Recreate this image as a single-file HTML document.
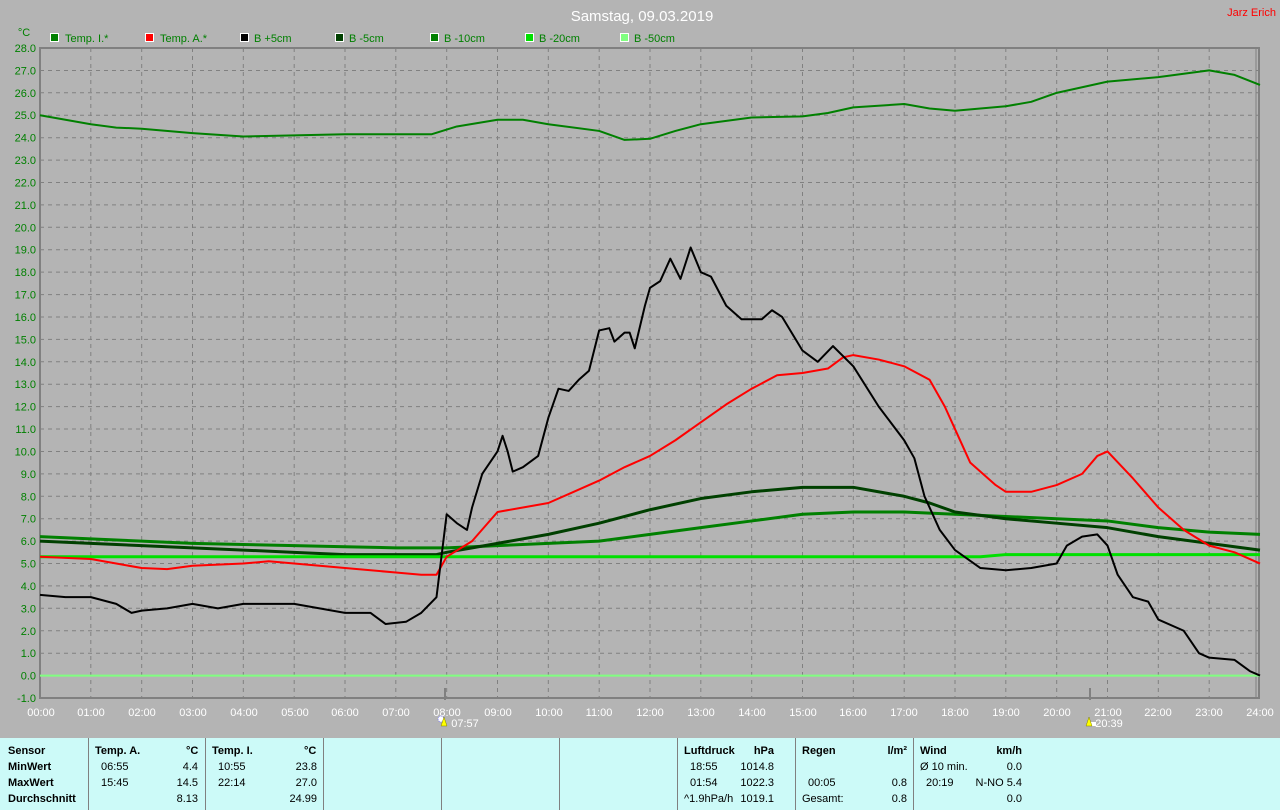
<!DOCTYPE html>
<html><head><meta charset="utf-8"><style>
html,body{margin:0;padding:0;}
body{width:1280px;height:810px;background:#b4b4b4;position:relative;overflow:hidden;font-family:"Liberation Sans",sans-serif;}
svg{position:absolute;left:0;top:0;}
.panel{position:absolute;left:0;top:738px;width:1280px;height:72px;background:#ccfaf8;font-size:11px;color:#000;}
.panel div{position:absolute;white-space:nowrap;}
.b{font-weight:bold;}
.sep{position:absolute;top:0;width:1px;height:72px;background:#808080;}
</style></head><body>
<svg width="1280" height="810" viewBox="0 0 1280 810" font-family="Liberation Sans, sans-serif">
<text x="642" y="21" fill="#ffffff" font-size="15" text-anchor="middle">Samstag, 09.03.2019</text>
<text x="1276" y="16" fill="#ff0000" font-size="11" text-anchor="end">Jarz Erich</text>
<text x="24" y="36" fill="#008000" font-size="11" text-anchor="middle">°C</text>
<g font-size="11" fill="#008000">
<rect x="50.5" y="33.5" width="8" height="8" fill="#008000" stroke="#fff"/><text x="65" y="42">Temp. I.*</text>
<rect x="145.5" y="33.5" width="8" height="8" fill="#ff0000" stroke="#fff"/><text x="160" y="42">Temp. A.*</text>
<rect x="240.5" y="33.5" width="8" height="8" fill="#000" stroke="#fff"/><text x="254" y="42">B +5cm</text>
<rect x="335.5" y="33.5" width="8" height="8" fill="#004000" stroke="#fff"/><text x="349" y="42">B -5cm</text>
<rect x="430.5" y="33.5" width="8" height="8" fill="#008000" stroke="#fff"/><text x="444" y="42">B -10cm</text>
<rect x="525.5" y="33.5" width="8" height="8" fill="#00e000" stroke="#fff"/><text x="539" y="42">B -20cm</text>
<rect x="620.5" y="33.5" width="8" height="8" fill="#80ff80" stroke="#fff"/><text x="634" y="42">B -50cm</text>
</g>
<g stroke="#808080" stroke-width="1" stroke-dasharray="4,4">
<path d="M40 70.5H1258M40 92.8H1258M40 115.2H1258M40 137.7H1258M40 160.1H1258M40 182.5H1258M40 204.9H1258M40 227.3H1258M40 249.7H1258M40 272.1H1258M40 294.6H1258M40 317H1258M40 339.4H1258M40 361.8H1258M40 384.2H1258M40 406.6H1258M40 429H1258M40 451.5H1258M40 473.9H1258M40 496.3H1258M40 518.7H1258M40 541.1H1258M40 563.5H1258M40 585.9H1258M40 608.3H1258M40 630.8H1258M40 653.2H1258M40 675.6H1258"/>
<path d="M90.8 48V698M141.7 48V698M192.5 48V698M243.3 48V698M294.2 48V698M345 48V698M395.8 48V698M446.7 48V698M497.5 48V698M548.3 48V698M599.2 48V698M650 48V698M700.8 48V698M751.7 48V698M802.5 48V698M853.3 48V698M904.2 48V698M955 48V698M1005.8 48V698M1056.7 48V698M1107.5 48V698M1158.3 48V698M1209.2 48V698"/>
</g>
<g stroke="#808080" stroke-width="2" fill="none">
<path d="M40 48H1259V698H40Z"/>
<path d="M1256 48V698" stroke-width="1"/>
<path d="M445 688V700M1090 688V700"/>
</g>
<g font-size="11" fill="#008000" text-anchor="end">
<text x="36" y="52">28.0</text><text x="36" y="74.4">27.0</text><text x="36" y="96.8">26.0</text><text x="36" y="119.2">25.0</text><text x="36" y="141.7">24.0</text><text x="36" y="164.1">23.0</text><text x="36" y="186.5">22.0</text><text x="36" y="208.9">21.0</text><text x="36" y="231.3">20.0</text><text x="36" y="253.7">19.0</text><text x="36" y="276.1">18.0</text><text x="36" y="298.6">17.0</text><text x="36" y="321">16.0</text><text x="36" y="343.4">15.0</text><text x="36" y="365.8">14.0</text><text x="36" y="388.2">13.0</text><text x="36" y="410.6">12.0</text><text x="36" y="433">11.0</text><text x="36" y="455.5">10.0</text><text x="36" y="477.9">9.0</text><text x="36" y="500.3">8.0</text><text x="36" y="522.7">7.0</text><text x="36" y="545.1">6.0</text><text x="36" y="567.5">5.0</text><text x="36" y="589.9">4.0</text><text x="36" y="612.3">3.0</text><text x="36" y="634.8">2.0</text><text x="36" y="657.2">1.0</text><text x="36" y="679.6">0.0</text><text x="36" y="702">-1.0</text>
</g>
<g font-size="11" fill="#ffffff" text-anchor="middle">
<text x="41" y="716">00:00</text><text x="91" y="716">01:00</text><text x="142" y="716">02:00</text><text x="193" y="716">03:00</text><text x="244" y="716">04:00</text><text x="295" y="716">05:00</text><text x="345" y="716">06:00</text><text x="396" y="716">07:00</text><text x="447" y="716">08:00</text><text x="498" y="716">09:00</text><text x="549" y="716">10:00</text><text x="599" y="716">11:00</text><text x="650" y="716">12:00</text><text x="701" y="716">13:00</text><text x="752" y="716">14:00</text><text x="803" y="716">15:00</text><text x="853" y="716">16:00</text><text x="904" y="716">17:00</text><text x="955" y="716">18:00</text><text x="1006" y="716">19:00</text><text x="1057" y="716">20:00</text><text x="1108" y="716">21:00</text><text x="1158" y="716">22:00</text><text x="1209" y="716">23:00</text><text x="1260" y="716">24:00</text>
<text x="465" y="727">07:57</text><text x="1109" y="727">20:39</text>
</g>
<circle cx="441" cy="719" r="3" fill="#ffffff" stroke="#6060ff" stroke-width="0.7" stroke-dasharray="1,1"/>
<path d="M444 717l-3 9h6z" fill="#ffff00" stroke="#808000" stroke-width="0.5"/>
<rect x="1090" y="722" width="6" height="4" fill="#ffffff"/>
<path d="M1089 717l-3 9h6z" fill="#ffff00" stroke="#808000" stroke-width="0.5"/>
<g transform="translate(40,675.6) scale(50.833,-22.414)" fill="none" stroke-linejoin="round">
<polyline vector-effect="non-scaling-stroke" stroke="#80ff80" stroke-width="2" points="0,0 24,0"/>
<polyline vector-effect="non-scaling-stroke" stroke="#008000" stroke-width="3" points="0,6.2 1,6.1 2,6.0 3,5.9 4,5.85 5,5.8 6,5.75 7,5.7 8,5.7 9,5.8 10,5.9 11,6.0 12,6.3 13,6.6 14,6.9 15,7.2 16,7.3 17,7.3 18,7.2 19,7.1 20,7.0 21,6.9 22,6.6 23,6.4 24,6.3"/>
<polyline vector-effect="non-scaling-stroke" stroke="#004000" stroke-width="3" points="0,6.0 1,5.9 2,5.8 3,5.7 4,5.6 5,5.5 6,5.4 7,5.4 7.8,5.4 8,5.5 8.5,5.7 9,5.9 10,6.3 11,6.8 12,7.4 13,7.9 14,8.2 15,8.4 16,8.4 17,8.0 17.5,7.7 18,7.3 19,7.0 20,6.8 21,6.6 22,6.2 23,5.9 24,5.6"/>
<polyline vector-effect="non-scaling-stroke" stroke="#00e000" stroke-width="3" points="0,5.3 18.5,5.3 19,5.4 24,5.4"/>
<polyline vector-effect="non-scaling-stroke" stroke="#008000" stroke-width="2" points="0,25.0 1,24.6 1.5,24.45 2,24.4 3,24.2 4,24.05 5,24.1 6,24.15 7.7,24.15 8.2,24.5 9,24.8 9.5,24.8 10,24.6 11,24.3 11.5,23.9 12,23.95 12.5,24.3 13,24.6 14,24.9 15,24.95 15.5,25.1 16,25.35 17,25.5 17.5,25.3 18,25.2 18.5,25.3 19,25.4 19.5,25.6 20,26.0 21,26.5 22,26.7 22.5,26.85 23,27.0 23.5,26.8 24,26.35"/>
<polyline vector-effect="non-scaling-stroke" stroke="#ff0000" stroke-width="2" points="0,5.3 1,5.2 1.5,5.0 2,4.8 2.5,4.75 3,4.9 4,5.0 4.5,5.1 5,5.0 6,4.8 7,4.6 7.5,4.5 7.8,4.5 8,5.3 8.5,6.0 9,7.3 9.5,7.5 10,7.7 10.5,8.2 11,8.7 11.5,9.3 12,9.8 12.5,10.5 13,11.3 13.5,12.1 14,12.8 14.5,13.4 15,13.5 15.5,13.7 15.8,14.2 16,14.3 16.5,14.1 17,13.8 17.5,13.2 17.8,12.0 18,11.0 18.3,9.5 18.8,8.5 19,8.2 19.5,8.2 20,8.5 20.5,9.0 20.8,9.8 21,10.0 21.5,8.8 22,7.5 22.5,6.5 23,5.8 23.5,5.5 24,5.0"/>
<polyline vector-effect="non-scaling-stroke" stroke="#000000" stroke-width="2" points="0,3.6 0.5,3.5 1,3.5 1.5,3.2 1.8,2.8 2,2.9 2.5,3.0 3,3.2 3.5,3.0 4,3.2 5,3.2 5.5,3.0 6,2.8 6.5,2.8 6.8,2.3 7.2,2.4 7.5,2.8 7.8,3.5 8,7.2 8.2,6.8 8.4,6.5 8.5,7.5 8.7,9.0 9,10.0 9.1,10.7 9.2,10.0 9.3,9.1 9.5,9.3 9.8,9.8 10,11.5 10.2,12.8 10.4,12.7 10.6,13.2 10.8,13.6 11,15.4 11.2,15.5 11.3,14.9 11.5,15.3 11.6,15.3 11.7,14.6 11.9,16.5 12,17.3 12.2,17.6 12.4,18.6 12.6,17.7 12.8,19.1 13,18.0 13.2,17.8 13.5,16.5 13.8,15.9 14.2,15.9 14.4,16.3 14.6,16.0 15,14.5 15.3,14.0 15.6,14.7 16,13.8 16.5,12.0 17,10.5 17.2,9.7 17.4,8.0 17.7,6.5 18,5.6 18.5,4.8 19,4.7 19.5,4.8 20,5.0 20.2,5.8 20.5,6.2 20.8,6.3 21,5.8 21.2,4.5 21.5,3.5 21.8,3.3 22,2.5 22.5,2.0 22.8,1.0 23,0.8 23.5,0.7 23.8,0.2 24,0.0"/>
</g>
</svg>
<div class="panel">
<div class="sep" style="left:88px"></div><div class="sep" style="left:205px"></div><div class="sep" style="left:323px"></div><div class="sep" style="left:441px"></div><div class="sep" style="left:559px"></div><div class="sep" style="left:677px"></div><div class="sep" style="left:795px"></div><div class="sep" style="left:913px"></div>
<div class="b" style="left:8px;top:7px">Sensor</div><div class="b" style="left:8px;top:23px">MinWert</div><div class="b" style="left:8px;top:39px">MaxWert</div><div class="b" style="left:8px;top:55px">Durchschnitt</div>
<div class="b" style="left:95px;top:7px">Temp. A.</div><div class="b" style="left:186px;top:7px">°C</div>
<div style="left:101px;top:23px">06:55</div><div style="right:1082px;top:23px">4.4</div>
<div style="left:101px;top:39px">15:45</div><div style="right:1082px;top:39px">14.5</div>
<div style="right:1082px;top:55px">8.13</div>
<div class="b" style="left:212px;top:7px">Temp. I.</div><div class="b" style="left:304px;top:7px">°C</div>
<div style="left:218px;top:23px">10:55</div><div style="right:963px;top:23px">23.8</div>
<div style="left:218px;top:39px">22:14</div><div style="right:963px;top:39px">27.0</div>
<div style="right:963px;top:55px">24.99</div>
<div class="b" style="left:684px;top:7px">Luftdruck</div><div class="b" style="right:506px;top:7px">hPa</div>
<div style="left:690px;top:23px">18:55</div><div style="right:506px;top:23px">1014.8</div>
<div style="left:690px;top:39px">01:54</div><div style="right:506px;top:39px">1022.3</div>
<div style="left:684px;top:55px">^1.9hPa/h</div><div style="right:506px;top:55px">1019.1</div>
<div class="b" style="left:802px;top:7px">Regen</div><div class="b" style="right:373px;top:7px">l/m²</div>
<div style="left:808px;top:39px">00:05</div><div style="right:373px;top:39px">0.8</div>
<div style="left:802px;top:55px">Gesamt:</div><div style="right:373px;top:55px">0.8</div>
<div class="b" style="left:920px;top:7px">Wind</div><div class="b" style="right:258px;top:7px">km/h</div>
<div style="left:920px;top:23px">Ø 10 min.</div><div style="right:258px;top:23px">0.0</div>
<div style="left:926px;top:39px">20:19</div><div style="right:258px;top:39px">N-NO 5.4</div>
<div style="right:258px;top:55px">0.0</div>
</div>
</body></html>
